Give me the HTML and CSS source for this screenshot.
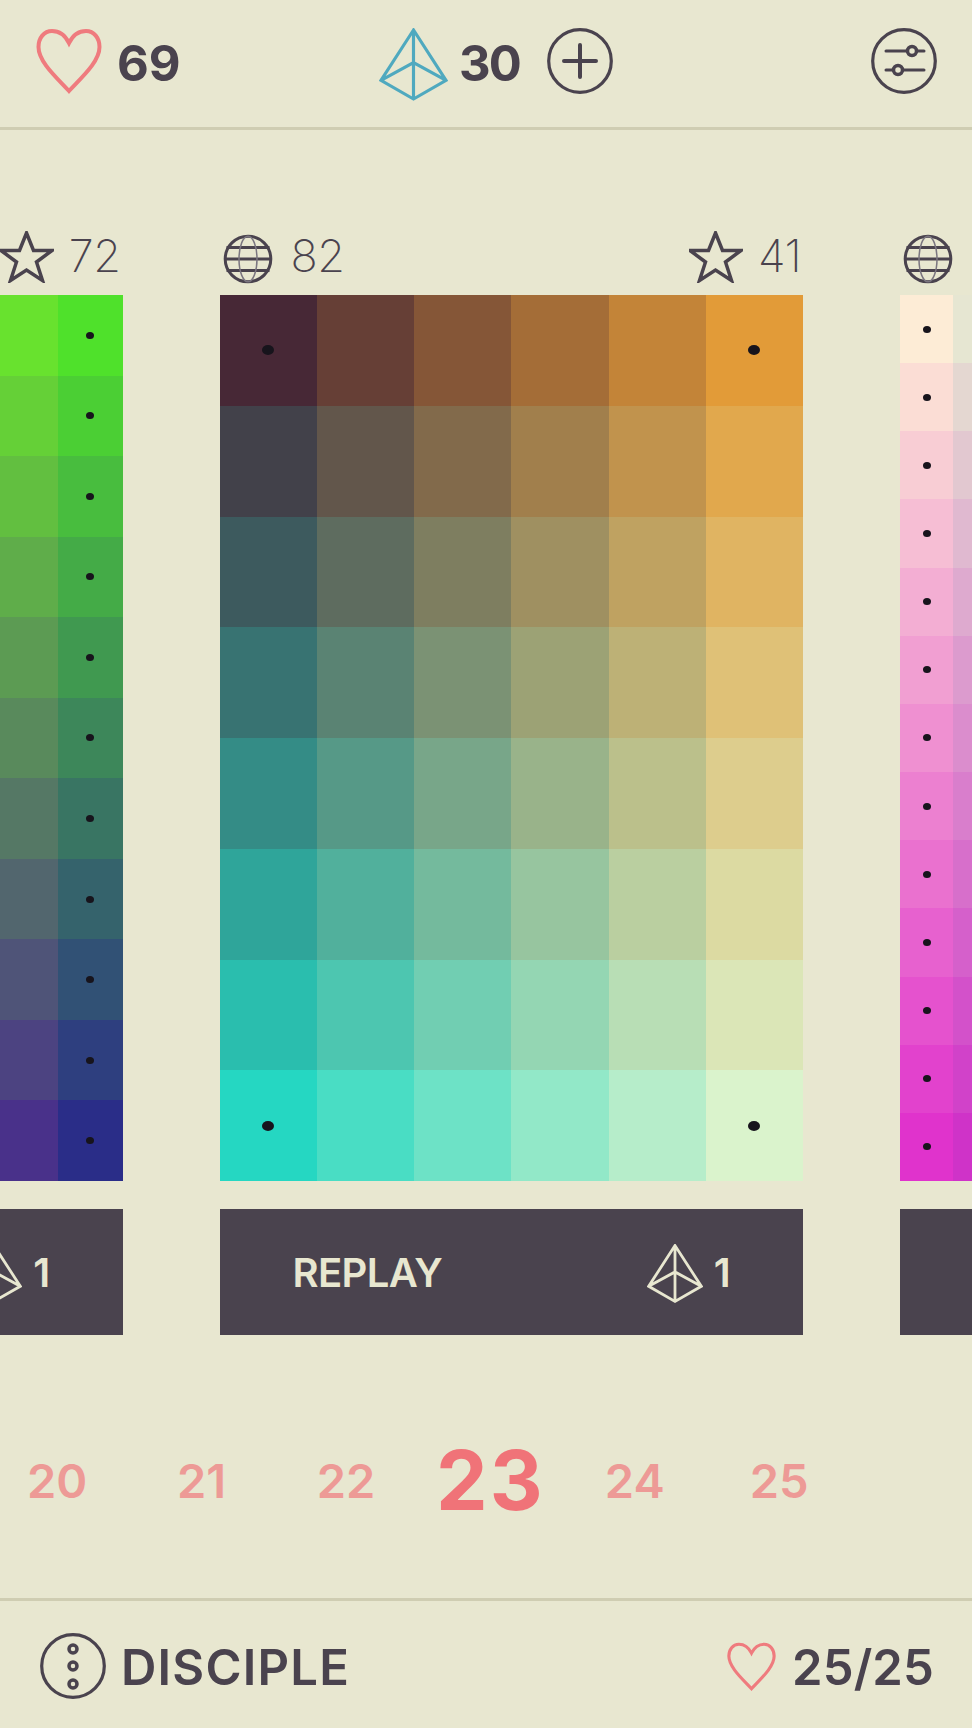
FILE: index.html
```html
<!DOCTYPE html>
<html lang="en">
<head>
<meta charset="utf-8">
<title>Palette levels</title>
<link rel="stylesheet" href="styles.css">
</head>
<body>
<svg class="defs" width="0" height="0" aria-hidden="true">
  <symbol id="heart" viewBox="0 0 66 66">
    <path d="M33 15C29 7 23 3 16 3 8 3 2.500 10 2.500 19 2.500 34 21 50 33 63 45 50 63.500 34 63.500 19 63.500 10 58 3 50 3 43 3 37 7 33 15Z"/>
  </symbol>
  <symbol id="pyramid" viewBox="0 0 70 74">
    <path d="M35 2 2 53 35 72 68 53ZM35 2V72M2 53 35 35 68 53"/>
  </symbol>
  <symbol id="star" viewBox="0 0 54 52">
    <path d="M26.500 2 33.500 19.500H52L36.500 31 42.500 49.500 26.500 39 10.500 49.500 16.500 31 1 19.500H19.500Z"/>
  </symbol>
  <symbol id="globe" viewBox="0 0 50 50">
    <circle cx="25" cy="25" r="22.800"/>
    <path d="M3.500 13.500H46.500M2 25H48M3.500 36.500H46.500"/>
    <ellipse class="meridian" cx="25" cy="25" rx="9" ry="22.800"/>
  </symbol>
</svg>

<header class="topbar">
  <div class="stat">
    <svg class="icon-heart-lg"><use href="#heart"/></svg>
    <span class="stat-num">69</span>
  </div>
  <div class="stat stat-gems">
    <svg class="icon-gem-lg"><use href="#pyramid"/></svg>
    <span class="stat-num">30</span>
    <svg class="round-btn round-btn-add" viewBox="0 0 66 66"><circle cx="33" cy="33" r="31.300"/><path d="M33 17V49M17 33H49"/></svg>
  </div>
  <svg class="round-btn round-btn-settings" viewBox="0 0 66 66">
    <circle cx="33" cy="33" r="31.300"/>
    <path d="M15 23H53M15 42H53"/>
    <circle class="knob" cx="41" cy="23" r="4.500"/>
    <circle class="knob" cx="27" cy="42" r="4.500"/>
  </svg>
</header>

<main class="carousel">
  <section class="level">
    <div class="level-meta">
      <div class="meta-item"><svg class="icon-globe"><use href="#globe"/></svg><span>68</span></div>
      <div class="meta-item"><svg class="icon-star"><use href="#star"/></svg><span>72</span></div>
    </div>
    <div class="palette" data-cols="9" data-rows="11" data-dots="side-right" data-tl="279,233,67" data-tr="79,225,43" data-bl="290,77,152" data-br="42,45,136"></div>
    <button class="replay"><span>REPLAY</span><span class="replay-cost"><svg class="icon-gem-sm"><use href="#pyramid"/></svg><span>1</span></span></button>
  </section>
  <section class="level">
    <div class="level-meta">
      <div class="meta-item"><svg class="icon-globe"><use href="#globe"/></svg><span>82</span></div>
      <div class="meta-item"><svg class="icon-star"><use href="#star"/></svg><span>41</span></div>
    </div>
    <div class="palette palette-big" data-cols="6" data-rows="8" data-dots="corners" data-tl="71,40,54" data-tr="226,155,56" data-bl="37,215,194" data-br="218,243,204"></div>
    <button class="replay"><span>REPLAY</span><span class="replay-cost"><svg class="icon-gem-sm"><use href="#pyramid"/></svg><span>1</span></span></button>
  </section>
  <section class="level">
    <div class="level-meta">
      <div class="meta-item"><svg class="icon-globe"><use href="#globe"/></svg><span>90</span></div>
      <div class="meta-item"><svg class="icon-star"><use href="#star"/></svg><span>55</span></div>
    </div>
    <div class="palette" data-cols="11" data-rows="13" data-dots="side-left" data-tl="253,236,214" data-tr="23,176,174" data-bl="224,51,204" data-br="54,51,164"></div>
    <button class="replay"><span>REPLAY</span><span class="replay-cost"><svg class="icon-gem-sm"><use href="#pyramid"/></svg><span>1</span></span></button>
  </section>
</main>

<nav class="levels">
  <span>20</span><span>21</span><span>22</span><span class="current">23</span><span>24</span><span>25</span>
</nav>

<footer class="bottombar">
  <div class="stat">
    <svg class="round-btn round-btn-menu" viewBox="0 0 66 66">
      <circle cx="33" cy="33" r="31.300"/>
      <circle class="knob" cx="33" cy="16" r="4"/>
      <circle class="knob" cx="33" cy="33" r="4"/>
      <circle class="knob" cx="33" cy="51" r="4"/>
    </svg>
    <span class="rank">DISCIPLE</span>
  </div>
  <div class="stat">
    <svg class="icon-heart-md"><use href="#heart"/></svg>
    <span class="progress">25/25</span>
  </div>
</footer>
<script src="palette.js"></script>
</body>
</html>
```
FILE: styles.css
```css
* { box-sizing: border-box; }
html, body { margin: 0; padding: 0; }
body {
  width: 972px;
  height: 1728px;
  overflow: hidden;
  background: #e8e7d0;
  color: #4a434e;
  font-family: Inter, Lato, "Noto Sans", sans-serif;
}
.defs { position: absolute; }

svg { display: block; fill: none; flex: none; overflow: visible; }

.topbar {
  height: 130px;
  padding: 28px 35px 0 36px;
  display: flex;
  align-items: flex-start;
  border-bottom: 3px solid #cfcdb2;
}
.stat { display: flex; align-items: center; }
.stat-gems { margin-left: 199px; height: 66px; }

.icon-heart-lg { width: 66px; height: 66px; stroke: #ef7b7e; stroke-width: 4px; }
.icon-gem-lg { width: 69px; height: 73px; margin-bottom: -7px; stroke: #4fa9bf; stroke-width: 3.200px; }
.stat-num {
  width: 63px;
  font-size: 49px;
  font-weight: 700;
  line-height: 66px;
  margin-left: 15px;
  position: relative;
  top: 3px;
}
.stat-gems .stat-num { width: 60px; margin-left: 11px; letter-spacing: -2px; }

.round-btn { width: 66px; height: 66px; stroke: #4a434e; stroke-width: 3.200px; }
.round-btn-add { margin-left: 28px; }
.round-btn-add path { stroke-width: 4px; stroke-linecap: round; }
.round-btn-settings { margin-left: auto; }
.round-btn-settings path { stroke-width: 3px; stroke-linecap: round; }
.knob { fill: #e8e7d0; stroke-width: 3.500px; }

.carousel {
  margin-left: -461px;
  padding-top: 100px;
  display: flex;
  gap: 97px;
  width: 2000px;
}
.level { width: 583.500px; flex: none; }
.level-meta {
  height: 53px;
  margin-bottom: 12px;
  padding: 0 2px 0 3px;
  display: flex;
  justify-content: space-between;
}
.meta-item {
  display: flex;
  align-items: center;
  gap: 15px;
  font-size: 45px;
  font-weight: 200;
  letter-spacing: -0.500px;
}
.meta-item span { line-height: 53px; position: relative; top: -1px; }

.icon-star { width: 54px; height: 52px; stroke: #4a434e; stroke-width: 3.500px; }
.icon-globe { width: 50px; height: 50px; margin: 5px 3px 0 0; stroke: #4a434e; stroke-width: 3px; }
.meridian { stroke: #7b7680; stroke-width: 1.500px; }

.palette {
  height: 886px;
  display: grid;
}
.cell { display: flex; align-items: center; justify-content: center; }
.dot { width: 8px; height: 7px; border-radius: 50%; background: #17141c; }
.palette-big .dot { width: 12px; height: 10px; }

.replay {
  margin-top: 28px;
  width: 100%;
  height: 126px;
  padding: 0 73px;
  border: 0;
  background: #4a434e;
  color: #e8e7d0;
  font-family: inherit;
  font-size: 40px;
  font-weight: 600;
  letter-spacing: -0.600px;
  display: flex;
  align-items: center;
  justify-content: space-between;
}
.replay-cost { display: flex; align-items: center; gap: 11px; }
.icon-gem-sm { width: 56px; height: 59px; stroke: #e8e7d0; stroke-width: 3.500px; margin-top: 3px; }

.levels {
  margin: 66px 0 39px -15px;
  height: 158px;
  width: 870px;
  display: grid;
  grid-template-columns: repeat(6, 144.400px);
  justify-items: center;
  align-items: center;
  font-size: 47px;
  font-weight: 600;
  color: #ed9a96;
}
.levels .current {
  font-size: 82px;
  font-weight: 700;
  color: #f07378;
  letter-spacing: 2px;
}

.bottombar {
  height: 130px;
  padding: 32px 38px 0 40px;
  border-top: 3px solid #cfcdb2;
  display: flex;
  justify-content: space-between;
  align-items: flex-start;
}
.rank, .progress {
  font-size: 49px;
  font-weight: 600;
  line-height: 66px;
  position: relative;
  top: 2px;
}
.rank { margin-left: 15px; letter-spacing: 1.200px; }
.progress { margin-left: 16px; letter-spacing: 0.150px; }
.icon-heart-md { width: 49px; height: 49px; stroke: #ef7b7e; stroke-width: 4.200px; }
```
FILE: palette.js
```js
// Fills every palette with its cells: colours are interpolated between the four corners.
function rgb(text) {
  return text.split(',').map(Number);
}

function mix(a, b, t) {
  return a.map(function (v, i) { return v + (b[i] - v) * t; });
}

function hasDot(mode, row, col, rows, cols) {
  if (mode === 'side-right') return col === cols - 1;
  if (mode === 'side-left') return col === 0;
  return (row === 0 || row === rows - 1) && (col === 0 || col === cols - 1);
}

document.querySelectorAll('.palette').forEach(function (palette) {
  var d = palette.dataset;
  var cols = Number(d.cols);
  var rows = Number(d.rows);
  palette.style.gridTemplateColumns = 'repeat(' + cols + ', 1fr)';
  palette.style.gridTemplateRows = 'repeat(' + rows + ', 1fr)';
  for (var r = 0; r < rows; r++) {
    var left = mix(rgb(d.tl), rgb(d.bl), r / (rows - 1));
    var right = mix(rgb(d.tr), rgb(d.br), r / (rows - 1));
    for (var c = 0; c < cols; c++) {
      var colour = mix(left, right, c / (cols - 1)).map(function (v) {
        return Math.max(0, Math.min(255, Math.round(v)));
      });
      var cell = document.createElement('div');
      cell.className = 'cell';
      cell.style.backgroundColor = 'rgb(' + colour.join(',') + ')';
      if (hasDot(d.dots, r, c, rows, cols)) {
        var dot = document.createElement('span');
        dot.className = 'dot';
        cell.appendChild(dot);
      }
      palette.appendChild(cell);
    }
  }
});
```
